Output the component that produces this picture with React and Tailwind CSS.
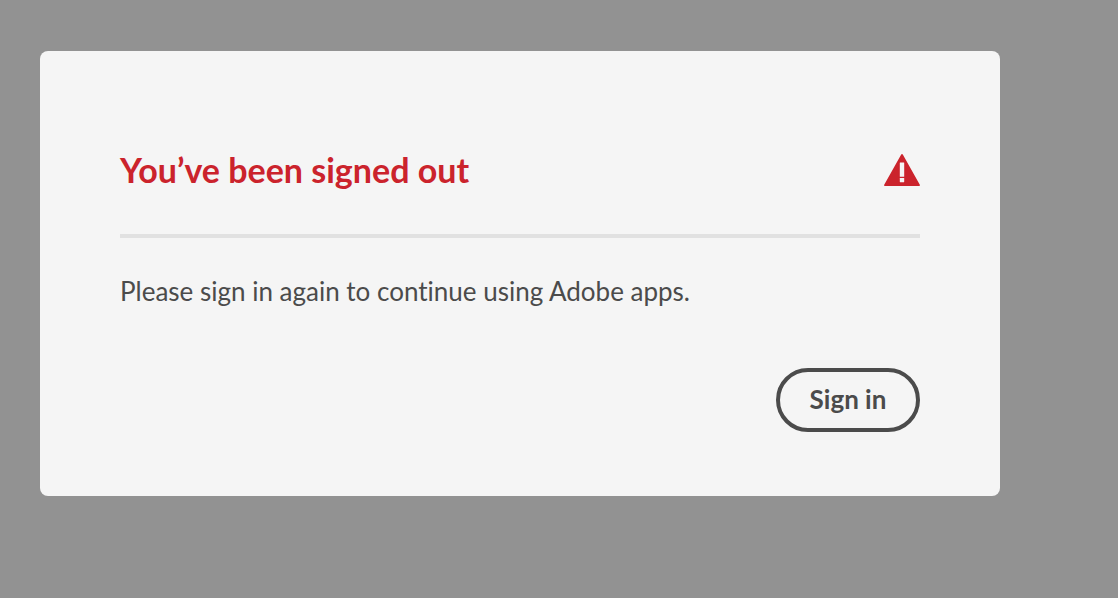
import React from 'react';

const AlertIcon = () => (
    <svg viewBox="0 0 36 32" className="w-9 h-8 shrink-0" aria-hidden="true">
        <path d="M17.2 0.6a0.9 0.9 0 0 1 1.6 0L35.8 30.7a0.9 0.9 0 0 1-0.8 1.3H1a0.9 0.9 0 0 1-0.8-1.3Z" fill="#cb232c"/>
        <rect x="15.8" y="8.4" width="4.4" height="14.4" rx="0.4" fill="#f5f5f5"/>
        <rect x="15.8" y="24" width="4.4" height="4.2" rx="0.4" fill="#f5f5f5"/>
    </svg>
);

const App = () => {
    return (
        <div className="min-h-screen bg-[#929292] pt-[51px] pb-10 pl-10 pr-[118px] font-['Lato',sans-serif] [font-variant-ligatures:none]">
            <section
                role="alertdialog"
                aria-labelledby="dialog-title"
                aria-describedby="dialog-text"
                className="bg-[#f5f5f5] rounded-lg px-20 pt-24 pb-16"
            >
                <div className="flex items-center justify-between border-b-4 border-[#e1e1e1] pb-[41px]">
                    <h1 id="dialog-title" className="text-[34px] leading-[46px] font-bold text-[#cb232c]">
                        You’ve been signed out
                    </h1>
                    <AlertIcon/>
                </div>
                <p id="dialog-text" className="mt-8 text-[26px] leading-[42px] text-[#4b4b4b]">
                    Please sign in again to continue using Adobe apps.
                </p>
                <div className="flex justify-end mt-14">
                    <button type="button" className="w-36 h-16 pb-0.5 rounded-full border-4 border-[#4b4b4b] text-[26px] leading-8 font-bold text-[#4b4b4b] cursor-pointer">
                        Sign in
                    </button>
                </div>
            </section>
        </div>
    );
};

export default App;
